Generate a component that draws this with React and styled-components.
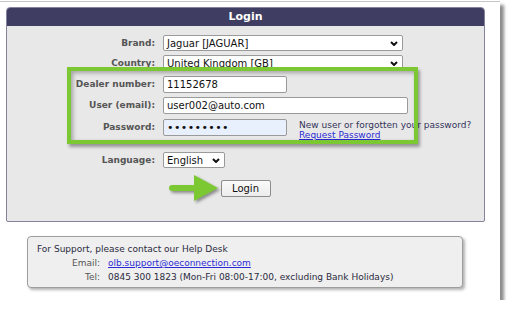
import React from 'react';
import styled, { createGlobalStyle } from 'styled-components';

const GlobalStyle = createGlobalStyle`
  html, body {
    margin: 0;
    padding: 0;
    background: #ffffff;
  }
  body {
    padding-top: 1px;
    font-family: "DejaVu Sans", Verdana, sans-serif;
  }
`;

const Frame = styled.div`
  position: relative;
  box-sizing: border-box;
  width: 500px;
  height: 299px;
  padding: 5px 0 0 6px;
  background: #ffffff;
  border-top: 1px solid #c6c6c6;
  box-shadow: 4px 4px 3px rgba(0, 0, 0, 0.45);
`;

const Panel = styled.section`
  box-sizing: border-box;
  width: 479px;
  height: 215px;
  background: #e8e8e8;
  border: 1px solid #85839b;
  border-radius: 4px 4px 2px 2px;
  overflow: hidden;
`;

const PanelHeader = styled.header`
  height: 18px;
  line-height: 18px;
  background: #3f3d61;
  color: #ffffff;
  font-size: 11px;
  font-weight: bold;
  text-align: center;
`;

const Form = styled.div`
  display: grid;
  grid-template-columns: 148px 1fr;
  grid-template-rows: 20px 21px 21px 22px 33px 28px 20px;
  column-gap: 8px;
  padding-top: 9px;
`;

const Label = styled.label`
  text-align: right;
  font-size: 9px;
  font-weight: bold;
  color: #555555;
  line-height: ${p => p.h || 17}px;
`;

const FieldRow = styled.div`
  display: flex;
  align-items: flex-start;
`;

const Input = styled.input`
  box-sizing: border-box;
  width: ${p => p.w}px;
  height: 17px;
  margin: 0;
  padding: 0 3px;
  border: 1px solid #9a9a9a;
  border-radius: 2px;
  background: ${p => (p.autofill ? '#e8f0fe' : '#ffffff')};
  font-family: "DejaVu Sans", Verdana, sans-serif;
  font-size: ${p => (p.type === 'password' ? '11px' : '10px')};
  color: #111111;
  letter-spacing: ${p => (p.type === 'password' ? '0.4px' : 'normal')};
  outline: none;
`;

const SelectBox = styled.div`
  box-sizing: border-box;
  display: flex;
  align-items: center;
  justify-content: space-between;
  width: ${p => p.w}px;
  height: 16px;
  padding: 0 4px 0 3px;
  border: 1px solid #9a9a9a;
  border-radius: 2px;
  background: #ffffff;
  font-size: 10px;
  color: #111111;
  white-space: nowrap;
`;

const Hint = styled.div`
  margin: 1px 0 0 12px;
  font-size: 9px;
  line-height: 10px;
  color: #33335a;
  white-space: nowrap;
`;

const Link = styled.a`
  color: #2b2bd6;
  text-decoration: underline;
`;

const ButtonRow = styled.div`
  grid-column: 1 / span 2;
  display: flex;
  justify-content: center;
`;

const Button = styled.button`
  box-sizing: border-box;
  width: 50px;
  height: 17px;
  padding: 0;
  border: 1px solid #8c8c8c;
  border-radius: 2px;
  background: linear-gradient(#fafafa, #ececec);
  font-family: "DejaVu Sans", Verdana, sans-serif;
  font-size: 10px;
  color: #111111;
`;

const Support = styled.div`
  box-sizing: border-box;
  width: 436px;
  height: 52px;
  margin: 14px 0 0 21px;
  padding: 5px 9px;
  border: 1px solid #9d9d9d;
  border-radius: 4px;
  background: #efefef;
  box-shadow: 2px 2px 3px rgba(0, 0, 0, 0.3);
  font-size: 9px;
  line-height: 14px;
  color: #2a2a40;
`;

const Contact = styled.div`
  display: grid;
  grid-template-columns: 63px auto;
  column-gap: 8px;
`;

const ContactLabel = styled.span`
  text-align: right;
  color: #555555;
`;

const Highlight = styled.div`
  position: absolute;
  left: 67px;
  top: 65px;
  box-sizing: border-box;
  width: 351px;
  height: 77px;
  border: 4px solid #7bc833;
  box-shadow: 2px 3px 3px rgba(0, 0, 0, 0.35), inset 2px 2px 4px rgba(0, 0, 0, 0.3);
  pointer-events: none;
`;

const Arrow = styled.svg`
  position: absolute;
  left: 166px;
  top: 172px;
  filter: drop-shadow(2px 2px 1.5px rgba(0, 0, 0, 0.4));
`;

const Chevron = () => (
  <svg width="8" height="5" viewBox="0 0 8 5">
    <path d="M1 1 L4 4 L7 1" fill="none" stroke="#111" strokeWidth="2" />
  </svg>
);

const Select = ({ w, children }) => (
  <SelectBox w={w}>
    <span>{children}</span>
    <Chevron />
  </SelectBox>
);

export default function App() {
  return (
    <>
      <GlobalStyle />
      <Frame>
        <Panel>
          <PanelHeader>Login</PanelHeader>
          <Form>
            <Label h={16}>Brand:</Label>
            <FieldRow><Select w={240}>Jaguar [JAGUAR]</Select></FieldRow>

            <Label h={16}>Country:</Label>
            <FieldRow><Select w={240}>United Kingdom [GB]</Select></FieldRow>

            <Label>Dealer number:</Label>
            <FieldRow><Input w={124} defaultValue="11152678" readOnly /></FieldRow>

            <Label>User (email):</Label>
            <FieldRow><Input w={245} defaultValue="user002@auto.com" readOnly /></FieldRow>

            <Label>Password:</Label>
            <FieldRow>
              <Input w={124} type="password" autofill defaultValue="123456789" readOnly />
              <Hint>
                New user or forgotten your password?
                <br />
                <Link href="#">Request Password</Link>
              </Hint>
            </FieldRow>

            <Label h={16}>Language:</Label>
            <FieldRow><Select w={62}>English</Select></FieldRow>

            <ButtonRow>
              <Button>Login</Button>
            </ButtonRow>
          </Form>
        </Panel>

        <Support>
          For Support, please contact our Help Desk
          <Contact>
            <ContactLabel>Email:</ContactLabel>
            <Link href="#">olb.support@oeconnection.com</Link>
            <ContactLabel>Tel:</ContactLabel>
            <span>0845 300 1823 (Mon-Fri 08:00-17:00, excluding Bank Holidays)</span>
          </Contact>
        </Support>

        <Highlight />
        <Arrow width="56" height="30" viewBox="0 0 56 30">
          <rect x="3" y="11" width="27" height="6" rx="3" fill="#7bc833" />
          <polygon points="28,1 52,14 28,27" fill="#7bc833" />
        </Arrow>
      </Frame>
    </>
  );
}
